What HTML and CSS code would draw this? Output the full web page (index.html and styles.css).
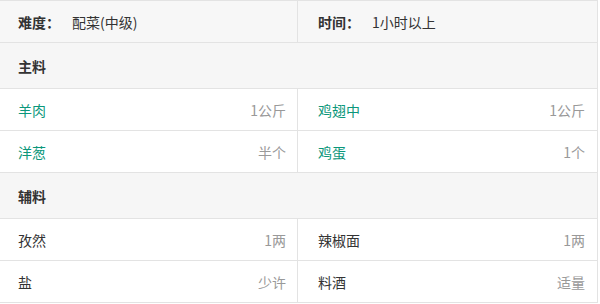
FILE: index.html
```html
<!DOCTYPE html>
<html lang="zh">
<head>
<meta charset="utf-8">
<link rel="stylesheet" href="styles.css">
</head>
<body>
<div class="recipe">
  <div class="cell head"><span class="lbl">难度：</span><span class="val">配菜(中级)</span></div>
  <div class="cell head right"><span class="lbl">时间：</span><span class="val">1小时以上</span></div>

  <div class="section">主料</div>
  <div class="cell item"><span class="name main">羊肉</span><span class="amt">1公斤</span></div>
  <div class="cell item right"><span class="name main">鸡翅中</span><span class="amt">1公斤</span></div>
  <div class="cell item"><span class="name main">洋葱</span><span class="amt">半个</span></div>
  <div class="cell item right"><span class="name main">鸡蛋</span><span class="amt">1个</span></div>

  <div class="section">辅料</div>
  <div class="cell item"><span class="name">孜然</span><span class="amt">1两</span></div>
  <div class="cell item right"><span class="name">辣椒面</span><span class="amt">1两</span></div>
  <div class="cell item"><span class="name">盐</span><span class="amt">少许</span></div>
  <div class="cell item right"><span class="name">料酒</span><span class="amt">适量</span></div>
</div>
</body>
</html>
```

FILE: styles.css
```css
html, body {
  margin: 0;
  padding: 0;
  background: #ffffff;
}
body {
  font-family: "Noto Sans CJK SC", "Noto Sans", sans-serif;
  font-size: 14px;
  color: #333333;
}
.recipe {
  width: 598px;
  display: grid;
  grid-template-columns: 298px 300px;
  border-top: 1px solid #e3e3e3;
}
.cell {
  display: flex;
  align-items: center;
  border-right: 1px solid #e3e3e3;
  border-bottom: 1px solid #e3e3e3;
  padding: 0 11px 0 18px;
  box-sizing: border-box;
}
.cell.right {
  padding: 0 12px 0 20px;
}
.head {
  height: 42px;
  background: #f7f7f7;
}
.lbl {
  font-weight: bold;
  width: 54px;
}
.val {
  color: #333333;
}
.section {
  grid-column: 1 / span 2;
  height: 46px;
  box-sizing: border-box;
  display: flex;
  align-items: center;
  padding-left: 18px;
  background: #f6f6f6;
  font-weight: bold;
  border-right: 1px solid #e3e3e3;
  border-bottom: 1px solid #e3e3e3;
}
.item {
  height: 42px;
  justify-content: space-between;
  background: #ffffff;
}
.name {
  color: #333333;
}
.name.main {
  color: #0b977b;
}
.amt {
  color: #999999;
}
```
